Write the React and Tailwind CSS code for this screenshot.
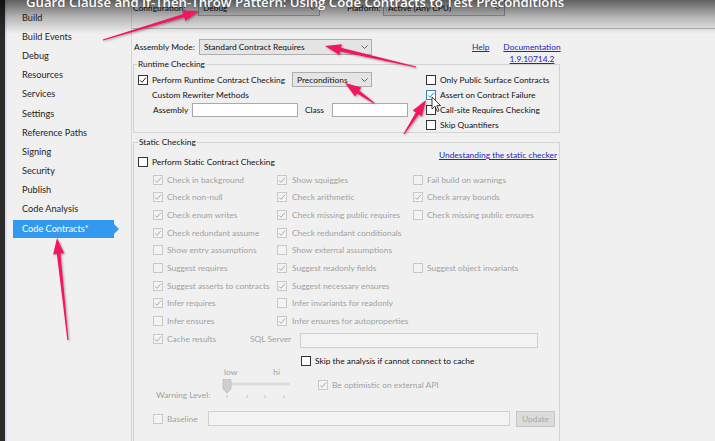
import React from 'react'

const SIDEBAR = [
  'Build', 'Build Events', 'Debug', 'Resources', 'Services', 'Settings',
  'Reference Paths', 'Signing', 'Security', 'Publish', 'Code Analysis', 'Code Contracts*'
]

const STATIC_ROWS = [
  [['Check in background', 1], ['Show squiggles', 1], ['Fail build on warnings', 0]],
  [['Check non-null', 1], ['Check arithmetic', 1], ['Check array bounds', 1]],
  [['Check enum writes', 1], ['Check missing public requires', 1], ['Check missing public ensures', 0]],
  [['Check redundant assume', 1], ['Check redundant conditionals', 1], null],
  [['Show entry assumptions', 0], ['Show external assumptions', 0], null],
  [['Suggest requires', 0], ['Suggest readonly fields', 1], ['Suggest object invariants', 0]],
  [['Suggest asserts to contracts', 1], ['Suggest necessary ensures', 1], null],
  [['Infer requires', 1], ['Infer invariants for readonly', 0], null],
  [['Infer ensures', 0], ['Infer ensures for autoproperties', 1], null]
]

// red annotation arrows drawn over the screenshot: [tailX, tailY, tipX, tipY]
const ARROWS = [
  [103, 40, 199, 11],
  [416, 67, 325, 46],
  [374, 103, 345, 83],
  [404, 134, 426, 100],
  [68, 340, 57, 238]
]

function arrowPoints([x1, y1, x2, y2]) {
  const dx = x2 - x1
  const dy = y2 - y1
  const len = Math.sqrt(dx * dx + dy * dy)
  const ux = dx / len
  const uy = dy / len
  const nx = -uy
  const ny = ux
  const head = 16
  const bx = x2 - ux * head
  const by = y2 - uy * head
  const p = (x, y, w) => `${(x + nx * w).toFixed(1)},${(y + ny * w).toFixed(1)}`
  return [
    p(x1, y1, 0.6), p(bx, by, 1.8), p(bx, by, 5.5), `${x2},${y2}`,
    p(bx, by, -5.5), p(bx, by, -1.8), p(x1, y1, -0.6)
  ].join(' ')
}

function Box({ checked, disabled, hover }) {
  const border = hover ? 'border-[#3c7fb1]' : disabled ? 'border-[#c9c9c9]' : 'border-[#333333]'
  const bg = disabled ? 'bg-[#f3f3f3]' : 'bg-white'
  const stroke = hover ? '#3c7fb1' : disabled ? '#acacac' : '#222222'
  return (
    <span className={`flex w-[10px] h-[10px] shrink-0 border ${border} ${bg} items-center justify-center`}>
      {checked ? (
        <svg width="8" height="8" viewBox="0 0 8 8">
          <path d="M1 4.3 L3 6.3 L7 1.6" fill="none" stroke={stroke} strokeWidth="1" />
        </svg>
      ) : null}
    </span>
  )
}

function Chevron() {
  return (
    <svg width="7" height="4" viewBox="0 0 7 4" className="shrink-0">
      <path d="M0.5 0.5 L3.5 3.5 L6.5 0.5" fill="none" stroke="#555" strokeWidth="0.9" />
    </svg>
  )
}

function Select({ text, className }) {
  return (
    <div className={`flex items-center justify-between pl-[4px] pr-[3px] bg-[#e5e5e5] border border-[#adadad] ${className}`}>
      <span className="truncate">{text}</span>
      <Chevron />
    </div>
  )
}

function Check({ label, checked, disabled, gap = 'gap-[4px]' }) {
  return (
    <div className={`flex items-center ${gap} ${disabled ? 'text-[#a2a2a2]' : 'text-[#111]'}`}>
      <Box checked={checked} disabled={disabled} />
      <span className="whitespace-nowrap">{label}</span>
    </div>
  )
}

export default function App() {
  return (
    <div className="relative w-[715px] h-[441px] overflow-hidden bg-[#f0f0f0] flex font-['Lato','Liberation_Sans',sans-serif] text-[8.4px] leading-[12px] text-[#111] whitespace-nowrap">
      <div className="w-[5px] bg-[#2b2b2b] shrink-0" />
      <div className="w-[2px] bg-[#dcdcec] shrink-0" />

      {/* sidebar */}
      <div className="w-[125px] shrink-0 border-r border-[#d6d6d6] pt-[8px] text-[9.2px] text-[#1e1e1e]">
        {SIDEBAR.map((item) =>
          item === 'Code Contracts*' ? (
            <div key={item} className="h-[19.2px] flex items-center">
              <div className="ml-[6px] w-[101px] h-[18px] pl-[9px] flex items-center bg-[#3399ee] text-white">{item}</div>
              <span className="w-0 h-0 border-y-[5px] border-y-transparent border-l-[5px] border-l-[#3399ee]" />
            </div>
          ) : (
            <div key={item} className="h-[19.2px] flex items-center pl-[15px]">{item}</div>
          )
        )}
      </div>

      {/* main */}
      <div className="flex-1 min-w-0">
        <div className="h-[29px] border-b border-[#b8b8b8]">
          <div className="h-[16px] flex items-center pl-[1px]">
            <span className="w-[65px]">Configuration:</span>
            <Select text="Debug" className="w-[122px] h-[17px] -mt-[1px]" />
            <span className="w-[63px] pl-[27px]">Platform:</span>
            <Select text="Active (Any CPU)" className="w-[122px] h-[17px] -mt-[1px]" />
          </div>
        </div>

        <div className="pl-[1px]">
          <div className="h-[16px] mt-[10px] flex items-start">
            <span className="w-[66px] pl-[1px] h-[16px] flex items-center">Assembly Mode:</span>
            <Select text="Standard Contract Requires" className="w-[173px] h-[16px]" />
            <div className="w-[100px]" />
            <a className="w-[32px] mt-[2px] text-[#2323c0] underline">Help</a>
            <div className="w-[56px] mt-[2px] flex flex-col items-center text-[#2323c0] underline">
              <span>Documentation</span>
              <span>1.9.10714.2</span>
            </div>
          </div>

          <fieldset className="mt-[3px] w-[427px] border border-[#d3d3d3]">
            <legend className="ml-[3px] px-[1px] leading-[12px]">Runtime Checking</legend>
            <div className="h-[62px] flex">
              <div className="w-[292px] pl-[4px]">
                <div className="mt-[2px] h-[15px] flex items-center">
                  <div className="w-[154px]">
                    <Check label="Perform Runtime Contract Checking" checked />
                  </div>
                  <Select text="Preconditions" className="w-[80px] h-[15px]" />
                </div>
                <div className="mt-[2px] h-[12px] pl-[14px]">Custom Rewriter Methods</div>
                <div className="mt-[2px] h-[14px] flex items-center pl-[15px]">
                  <span className="w-[39px]">Assembly</span>
                  <div className="w-[106px] h-[14px] bg-white border border-[#a9a9a9]" />
                  <span className="ml-[7px] w-[27px]">Class</span>
                  <div className="w-[76px] h-[14px] bg-white border border-[#a9a9a9]" />
                </div>
              </div>
              <div className="pt-[2px]">
                <div className="h-[15px] flex items-center"><Check label="Only Public Surface Contracts" /></div>
                <div className="h-[15px] flex items-center">
                  <div className="flex items-center gap-[4px]">
                    <Box checked hover />
                    <span>Assert on Contract Failure</span>
                  </div>
                </div>
                <div className="h-[15px] flex items-center"><Check label="Call-site Requires Checking" /></div>
                <div className="h-[15px] flex items-center"><Check label="Skip Quantifiers" /></div>
              </div>
            </div>
          </fieldset>

          <fieldset className="mt-[3px] w-[427px] h-[330px] border border-[#d3d3d3]">
            <legend className="ml-[4px] px-[1px] leading-[12px]">Static Checking</legend>
            <div className="h-[20px] flex items-start justify-between pl-[4px] pr-[2px]">
              <div className="mt-[8px]"><Check label="Perform Static Contract Checking" /></div>
              <a className="mt-[1px] text-[#2323c0] underline">Undestanding the static checker</a>
            </div>

            <div className="mt-[3px] pl-[19px]">
              {STATIC_ROWS.map((row, i) => (
                <div key={i} className="h-[17.67px] flex items-center">
                  {row.map((cell, j) => (
                    <div key={j} className={j === 0 ? 'w-[124px]' : j === 1 ? 'w-[136px]' : 'flex-1'}>
                      {cell ? <Check label={cell[0]} checked={!!cell[1]} disabled gap={j === 1 ? 'gap-[5px]' : 'gap-[4px]'} /> : null}
                    </div>
                  ))}
                </div>
              ))}
              <div className="h-[17.67px] flex items-center">
                <div className="w-[97px]"><Check label="Cache results" checked disabled /></div>
                <span className="w-[50px] text-[#a2a2a2]">SQL Server</span>
                <div className="w-[238px] h-[15px] mt-[4px] bg-[#f3f3f3] border border-[#d0d0d0]" />
              </div>
            </div>

            <div className="mt-[7px] h-[12px] pl-[167px] flex items-center">
              <Check label="Skip the analysis if cannot connect to cache" />
            </div>

            <div className="h-[36px] flex">
              <div className="w-[88px] pl-[22px] pt-[22px] text-[#a2a2a2]">Warning Level:</div>
              <div className="w-[70px]">
                <div className="h-[10px] pl-[2px] pr-[12px] flex justify-between items-center text-[#a2a2a2] leading-[10px]">
                  <span>low</span>
                  <span>hi</span>
                </div>
                <svg width="70" height="22" viewBox="0 0 70 22" className="mt-[2px]">
                  <rect x="5" y="4" width="62" height="2" fill="#dcdcdc" stroke="#d0d0d0" strokeWidth="0.5" />
                  <path d="M1 0.5 H9 V10 L5 14 L1 10 Z" fill="#cfcfcf" stroke="#bdbdbd" strokeWidth="0.8" />
                  {[5, 25, 43, 62].map((x) => (
                    <line key={x} x1={x} y1="16" x2={x} y2="19" stroke="#bdbdbd" strokeWidth="0.9" />
                  ))}
                </svg>
              </div>
              <div className="pl-[26px] pt-[12px]">
                <Check label="Be optimistic on external API" checked disabled />
              </div>
            </div>

            <div className="mt-[8px] h-[16px] pl-[19px] flex items-center">
              <div className="w-[55px]"><Check label="Baseline" disabled /></div>
              <div className="w-[302px] h-[15px] bg-[#f3f3f3] border border-[#d0d0d0]" />
              <div className="ml-[6px] w-[39px] h-[16px] flex items-center justify-center bg-[#dcdcdc] border border-[#c6c6c6] text-[#a8a8a8]">Update</div>
            </div>
          </fieldset>
        </div>
      </div>

      {/* video title overlay */}
      <div className="absolute left-0 top-0 w-[715px] h-[34px] bg-linear-to-b from-black/60 via-black/25 to-transparent pointer-events-none" />
      <div className="absolute left-[26px] top-[-6px] font-['Open_Sans',sans-serif] font-semibold text-[13.2px] leading-[16px] text-white [text-shadow:0_0_2px_rgba(0,0,0,0.4)]">
        Guard Clause and If-Then-Throw Pattern: Using Code Contracts to Test Preconditions
      </div>

      {/* annotations */}
      <svg className="absolute left-0 top-0 pointer-events-none" width="715" height="441" viewBox="0 0 715 441">
        <defs>
          <filter id="sh" x="-20%" y="-20%" width="140%" height="140%">
            <feDropShadow dx="1" dy="1" stdDeviation="1" floodColor="#000" floodOpacity="0.35" />
          </filter>
        </defs>
        {ARROWS.map((a, i) => (
          <polygon key={i} points={arrowPoints(a)} fill="#f2145e" filter="url(#sh)" />
        ))}
        <path d="M432 97 L432 109 L435 106.3 L437.3 111.5 L439 110.7 L436.8 105.6 L440.6 105.6 Z" fill="#fff" stroke="#111" strokeWidth="0.8" />
      </svg>
    </div>
  )
}
